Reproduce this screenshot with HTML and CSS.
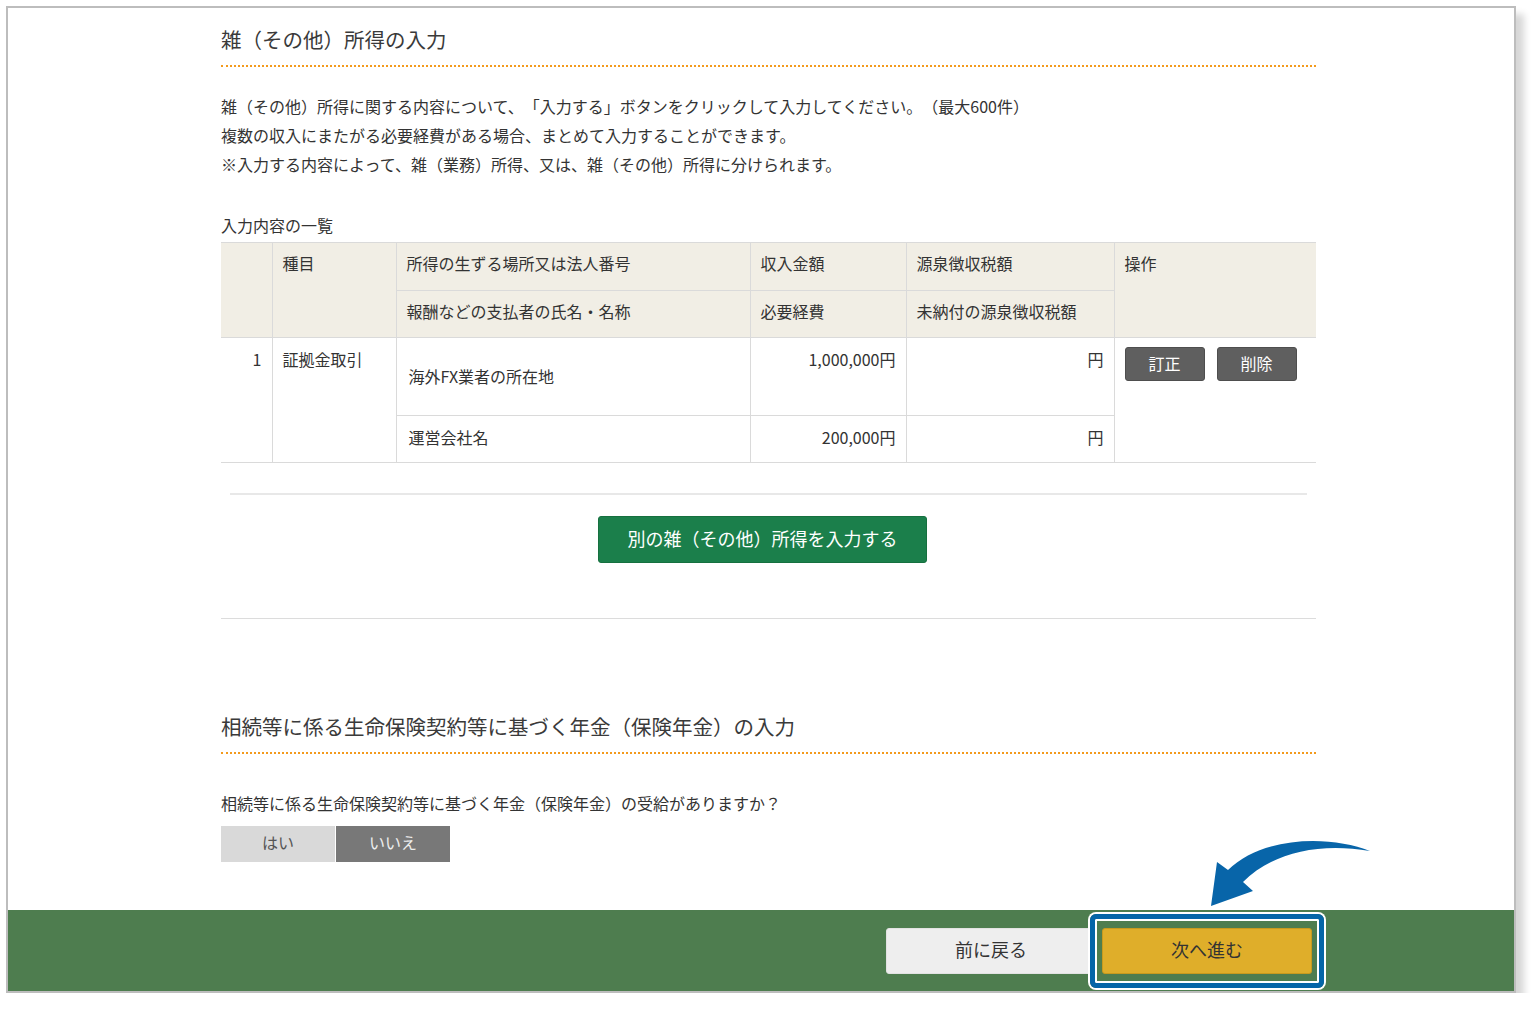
FILE: index.html
```html
<!DOCTYPE html>
<html lang="ja">
<head>
<meta charset="utf-8">
<title>雑（その他）所得の入力</title>
<link rel="stylesheet" href="styles.css">
</head>
<body>
<div class="frame">
  <main class="content">
    <section class="sec">
      <h2 class="sec-title">雑（その他）所得の入力</h2>
      <div class="lead">
        <p>雑（その他）所得に関する内容について、「入力する」ボタンをクリックして入力してください。（最大600件）</p>
        <p>複数の収入にまたがる必要経費がある場合、まとめて入力することができます。</p>
        <p>※入力する内容によって、雑（業務）所得、又は、雑（その他）所得に分けられます。</p>
      </div>
      <div class="list-label">入力内容の一覧</div>
      <table class="tbl">
        <colgroup>
          <col class="c1"><col class="c2"><col class="c3"><col class="c4"><col class="c5"><col class="c6">
        </colgroup>
        <thead>
          <tr class="h1">
            <th rowspan="2" class="first"></th>
            <th rowspan="2">種目</th>
            <th>所得の生ずる場所又は法人番号</th>
            <th>収入金額</th>
            <th>源泉徴収税額</th>
            <th rowspan="2" class="last">操作</th>
          </tr>
          <tr class="h2">
            <th>報酬などの支払者の氏名・名称</th>
            <th>必要経費</th>
            <th>未納付の源泉徴収税額</th>
          </tr>
        </thead>
        <tbody>
          <tr class="b1">
            <td rowspan="2" class="first num">1</td>
            <td rowspan="2">証拠金取引</td>
            <td class="mid">海外FX業者の所在地</td>
            <td class="num">1,000,000円</td>
            <td class="num">円</td>
            <td rowspan="2" class="last ops">
              <div class="ops-row">
                <button class="btn-dark">訂正</button>
                <button class="btn-dark">削除</button>
              </div>
            </td>
          </tr>
          <tr class="b2">
            <td class="mid">運営会社名</td>
            <td class="num">200,000円</td>
            <td class="num">円</td>
          </tr>
        </tbody>
      </table>
      <div class="add-area">
        <button class="btn-green">別の雑（その他）所得を入力する</button>
      </div>
    </section>

    <section class="sec sec2">
      <h2 class="sec-title">相続等に係る生命保険契約等に基づく年金（保険年金）の入力</h2>
      <p class="question">相続等に係る生命保険契約等に基づく年金（保険年金）の受給がありますか？</p>
      <div class="toggle">
        <button class="tg tg-yes">はい</button>
        <button class="tg tg-no">いいえ</button>
      </div>
    </section>
  </main>
  <footer class="bar">
    <button class="btn-back">前に戻る</button>
    <button class="btn-next">次へ進む</button>
  </footer>
</div>

<div class="highlight"></div>
<svg class="arrow" viewBox="1200 830 180 85" width="180" height="85" aria-hidden="true">
  <path d="M1370 851 C1330 835 1262 836 1228 870 L1217 862 L1211 906 L1253 891 L1243 882 C1272 853 1318 842 1370 851 Z" fill="#0865a9"/>
</svg>
</body>
</html>
```

FILE: styles.css
```css
* { box-sizing: border-box; }
html, body { margin: 0; padding: 0; background: #fff; }
body {
  font-family: "Noto Sans CJK JP", "Noto Sans", sans-serif;
  color: #333;
  font-size: 16px;
  text-spacing-trim: space-all;
}
button { font-family: inherit; cursor: pointer; text-spacing-trim: space-all; }

.frame {
  margin: 6px 0 0 6px;
  width: 1510px;
  height: 987px;
  border: 2px solid #bdbdbd;
  box-shadow: 8px 8px 7px rgba(0, 0, 0, 0.16);
  display: flex;
  flex-direction: column;
  background: #fff;
}
.content {
  flex: 1;
  padding: 16px 198px 0 213px;
}
.sec-title {
  margin: 0;
  font-size: 20.5px;
  font-weight: normal;
  line-height: 30px;
  color: #3a3a3a;
  padding-bottom: 11px;
  border-bottom: 2px dotted #f39a1d;
}
.lead { margin-top: 25px; }
.lead p {
  margin: 0;
  font-size: 16px;
  line-height: 29px;
}
.list-label {
  margin-top: 34px;
  line-height: 24px;
  font-size: 16px;
  margin-bottom: 5px;
}

.tbl {
  width: 1095px;
  border-collapse: collapse;
  table-layout: fixed;
  font-size: 16px;
}
.c1 { width: 51px; }
.c2 { width: 124px; }
.c3 { width: 354px; }
.c4 { width: 156px; }
.c5 { width: 208px; }
.c6 { width: 202px; }
.tbl th, .tbl td {
  border: 1px solid #dadada;
  padding: 10px 10px 0;
  vertical-align: top;
  text-align: left;
  font-weight: normal;
  line-height: 20px;
}
.tbl td { padding-top: 11px; }
.tbl th { background: #f1eee5; }
.tbl .first { border-left: none; }
.tbl .last { border-right: none; }
.tbl tr.h1 { height: 48px; }
.tbl tr.h2 { height: 47px; }
.tbl tr.b1 { height: 78px; }
.tbl tr.b2 { height: 47px; }
.tbl td.num { text-align: right; }
.tbl td.mid { vertical-align: middle; padding: 0 12px 2px; }
.tbl tr.b2 td.mid { vertical-align: top; padding-top: 11px; }
.tbl td.ops { padding: 9px 10px 0; }
.ops-row { display: flex; gap: 12px; }
.btn-dark {
  width: 80px;
  height: 34px;
  border: 1px solid #4e4e4e;
  border-radius: 3px;
  background: #5f5f5f;
  color: #fff;
  font-size: 16px;
  padding: 0 0 2px;
}

.add-area {
  margin: 30px 9px 0;
  border-top: 2px solid #e8e8e8;
  padding: 21px 12px 55px 0;
  display: flex;
  justify-content: center;
}
.btn-green {
  width: 329px;
  height: 47px;
  background: #1b7f4b;
  border: 1px solid #16703f;
  border-radius: 3px;
  color: #fff;
  font-size: 18px;
  padding: 0 0 4px;
}
.sec2 {
  border-top: 1px solid #dcdcdc;
  padding-top: 92px;
}
.question {
  margin: 37px 0 0;
  font-size: 16px;
  line-height: 24px;
}
.toggle {
  margin-top: 11px;
  display: flex;
  gap: 1px;
}
.tg {
  width: 114px;
  height: 36px;
  border: none;
  font-size: 16px;
  padding: 0 0 4px;
}
.tg-yes { background: #d9d9d9; color: #555; }
.tg-no { background: #787878; color: #eee; }

.bar {
  height: 81px;
  background: #4e7d4f;
  display: flex;
  justify-content: flex-end;
  align-items: center;
  gap: 6px;
  padding-right: 202px;
}
.btn-back {
  width: 210px;
  height: 46px;
  background: #eeeeee;
  border: 1px solid #e2e2e2;
  border-radius: 3px;
  color: #333;
  font-size: 18px;
  padding: 0 0 4px;
}
.btn-next {
  width: 210px;
  height: 46px;
  background: #dfae2a;
  border: 1px solid #c89a1e;
  border-radius: 3px;
  color: #333;
  font-size: 18px;
  padding: 0 0 4px;
}

.highlight {
  position: absolute;
  left: 1090px;
  top: 914px;
  width: 234px;
  height: 74px;
  border: 5px solid #0565a8;
  border-radius: 6px;
  box-shadow: 0 0 0 2px #fff, inset 0 0 0 2px #fff;
}
.arrow {
  position: absolute;
  left: 1200px;
  top: 830px;
}
```
